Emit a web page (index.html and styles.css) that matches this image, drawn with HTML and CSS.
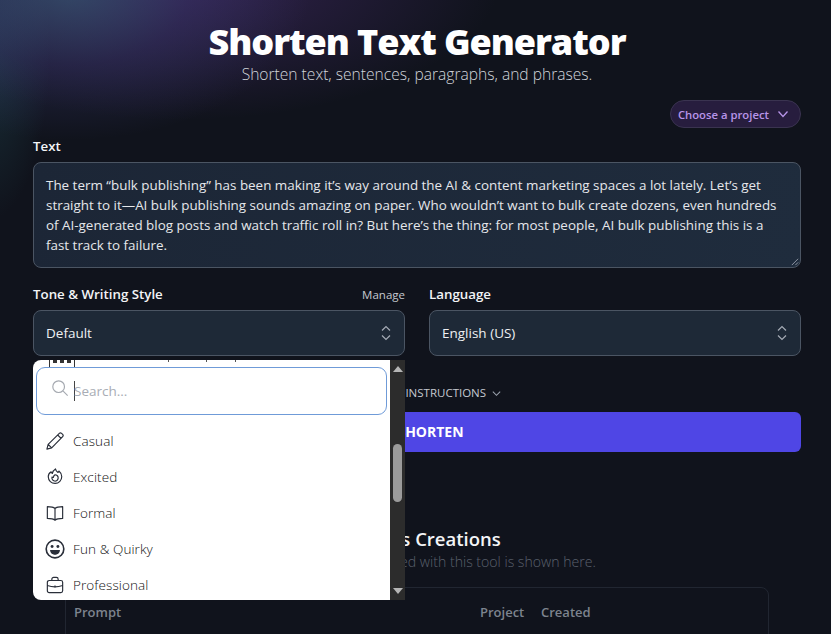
FILE: index.html
```html
<!DOCTYPE html>
<html lang="en">
<head>
<meta charset="utf-8">
<title>Shorten Text Generator</title>
<link rel="stylesheet" href="styles.css">
</head>
<body>
<div class="page">
  <header class="hero">
    <h1 class="title">Shorten Text Generator</h1>
    <p class="subtitle">Shorten text, sentences, paragraphs, and phrases.</p>
  </header>
  <div class="project-row">
    <button class="project-btn">Choose a project
      <svg class="project-chev" viewBox="0 0 12 12"><path d="M1.500 3.500 6 8.500l4.500-5"/></svg>
    </button>
  </div>
  <label class="label text-label">Text</label>
  <div class="textarea">The term “bulk publishing” has been making it’s way around the AI &amp; content marketing spaces a lot lately. Let’s get straight to it—AI bulk publishing sounds amazing on paper. Who wouldn’t want to bulk create dozens, even hundreds of AI-generated blog posts and watch traffic roll in? But here’s the thing: for most people, AI bulk publishing this is a fast track to failure.
    <svg class="grip" viewBox="0 0 10 10"><path d="M9 2 2 9M9 6 6 9"/></svg>
  </div>
  <div class="selects">
    <div class="field">
      <div class="field-head"><span class="label">Tone &amp; Writing Style</span><span class="manage">Manage</span></div>
      <div class="select">Default
        <svg class="updown" viewBox="0 0 12 18"><path d="M2 6.500 6 2.500l4 4M2 11.500l4 4 4-4"/></svg>
      </div>
    </div>
    <div class="field">
      <div class="field-head"><span class="label">Language</span></div>
      <div class="select">English (US)
        <svg class="updown" viewBox="0 0 12 18"><path d="M2 6.500 6 2.500l4 4M2 11.500l4 4 4-4"/></svg>
      </div>
    </div>
  </div>
  <div class="instructions">ADD CUSTOM INSTRUCTIONS
    <svg class="instr-chev" viewBox="0 0 12 12"><path d="M2 4l4 4 4-4"/></svg>
  </div>
  <button class="shorten">SHORTEN</button>
  <section class="creations">
    <h2 class="creations-title">Previous Creations</h2>
    <p class="creations-sub">Everything you've generated with this tool is shown here.</p>
    <div class="table">
      <span class="th th-prompt">Prompt</span>
      <span class="th th-project">Project</span>
      <span class="th th-created">Created</span>
    </div>
  </section>
</div>

<div class="dropdown">
  <div class="dd-body">
    <div class="dd-peek"><span class="dd-peek-icon"></span><span class="dd-peek-text"></span></div>
    <div class="search">
      <svg class="search-icon" viewBox="0 0 20 20"><circle cx="8.500" cy="8.500" r="6.500"/><path d="m13.500 13.500 5 5"/></svg>
      <span class="caret"></span><span class="placeholder">Search...</span>
    </div>
    <ul class="options">
      <li class="option">
        <svg class="opt-icon" viewBox="0 0 20 20"><path d="M1 19l1.400-5.300L14.800 1.500a1.800 1.800 0 0 1 2.500 0l1.200 1.200a1.800 1.800 0 0 1 0 2.500L6.300 17.600zM13 3.300l3.700 3.700M2.400 13.700l3.900 3.900"/></svg>
        Casual</li>
      <li class="option">
        <svg class="opt-icon" viewBox="0 0 20 20"><path d="M10.500 1c.3 2 1.500 3 2.800 4 .6-.5.9-1 1-1.700 2 1.600 3.200 3.900 3.200 6.200a7.500 7.500 0 0 1-15 .3c0-2.400 1.100-4.300 3.200-5.500.3 1 .7 1.500 1.400 1.800C7.400 4.100 8.700 2.100 10.500 1z"/><path d="M10 7.500a3.500 3.500 0 1 1-3.300 2.500c.6.400 1 .5 1.500.4.100-1.100.800-2.300 1.800-2.900z"/></svg>
        Excited</li>
      <li class="option">
        <svg class="opt-icon" viewBox="0 0 20 20"><path d="M10 5C8.500 3.600 6.500 3 1.500 3v13c5 0 7 .6 8.500 2 1.500-1.400 3.500-2 8.500-2V3c-5 0-7 .6-8.500 2zM10 5v13"/></svg>
        Formal</li>
      <li class="option">
        <svg class="opt-icon opt-fun" viewBox="0 0 22 22"><circle cx="11" cy="11" r="9.700"/><circle class="solid" cx="7.800" cy="8.300" r="1.600"/><circle class="solid" cx="14.200" cy="8.300" r="1.600"/><path class="solid" d="M5.600 12h10.800c0 3-2.400 5.200-5.400 5.200S5.600 15 5.600 12z"/></svg>
        Fun &amp; Quirky</li>
      <li class="option">
        <svg class="opt-icon" viewBox="0 0 20 20"><path d="M6.500 5V3.500a2 2 0 0 1 2-2h3a2 2 0 0 1 2 2V5M3.500 5h13a2 2 0 0 1 2 2v9.500a2 2 0 0 1-2 2h-13a2 2 0 0 1-2-2V7a2 2 0 0 1 2-2zM1.500 10.500c5.500 2 11.500 2 17 0M10 11v1.500"/></svg>
        Professional</li>
    </ul>
  </div>
  <div class="scrollbar">
    <span class="arrow arrow-up"></span>
    <span class="thumb"></span>
    <span class="arrow arrow-down"></span>
  </div>
</div>
</body>
</html>
```

FILE: styles.css
```css
* { box-sizing: border-box; }
html, body { margin: 0; height: 100%; }
body {
  width: 831px;
  height: 634px;
  overflow: hidden;
  position: relative;
  font-family: "Open Sans", "Noto Sans", sans-serif;
  color: #fff;
  background:
    radial-gradient(ellipse 240px 150px at 70px -10px, rgba(60,100,130,.6), rgba(60,60,120,.35) 50%, rgba(50,30,90,0) 100%),
    radial-gradient(ellipse 320px 140px at 180px -20px, rgba(85,50,130,.5), rgba(60,40,100,0) 100%),
    radial-gradient(ellipse 60px 170px at -10px 50px, rgba(40,100,110,.35), rgba(40,100,110,0) 100%),
    #10131c;
}
.page { padding: 20px 30px 0 33px; }
.hero { text-align: center; }
.title { margin: 0; font-size: 36px; line-height: 44px; font-weight: 800; letter-spacing: -1.050px; color: #fff; }
.subtitle { margin: 0; font-size: 15.600px; line-height: 20px; font-weight: 300; color: #d1d5db; }
.project-row { display: flex; justify-content: flex-end; margin-top: 16px; }
.project-btn {
  display: flex; align-items: center; gap: 8px;
  height: 28px; padding: 0 11px 0 7px;
  font: 600 11.300px "Open Sans", sans-serif; color: #b794e8;
  background: #271d3e; border: 1px solid #3a3350; border-radius: 14px;
}
.project-chev { width: 12px; height: 12px; fill: none; stroke: #b794e8; stroke-width: 1.300; }
.label { font-size: 13.300px; line-height: 18px; font-weight: 600; color: #f3f4f6; }
.text-label { display: block; margin-top: 9px; }
.textarea {
  position: relative; margin-top: 7px; height: 106px; padding: 12px 20px 12px 12px;
  font-size: 13.420px; line-height: 20px; color: #e5e7eb;
  background: linear-gradient(100deg, #1c2636, #1f2c3d);
  border: 1px solid #4b5563; border-radius: 8px;
}
.grip { position: absolute; right: 1px; bottom: 1px; width: 9px; height: 9px; fill: none; stroke: #9ca3af; stroke-width: 1; }
.selects { display: grid; grid-template-columns: 372px 372px; gap: 24px; margin-top: 17px; }
.field-head { display: flex; justify-content: space-between; align-items: center; height: 18px; }
.manage { font-size: 11.500px; color: #c5c9d0; }
.select {
  position: relative; display: flex; align-items: center; justify-content: space-between;
  height: 46px; margin-top: 7px; padding: 0 12px;
  font-size: 13.500px; color: #eef0f3;
  background: #1e2937; border: 1px solid #4b5563; border-radius: 8px;
}
.updown { width: 12px; height: 18px; fill: none; stroke: #a5abb5; stroke-width: 1.200; }
.instructions {
  display: flex; align-items: center; justify-content: center; gap: 5px;
  margin-top: 28px; padding-right: 4px; font-size: 11.500px; line-height: 18px; color: #c5c9d0;
}
.instr-chev { width: 11px; height: 11px; fill: none; stroke: #9ca3af; stroke-width: 1.100; }
.shorten {
  display: block; width: 100%; height: 40px; margin-top: 10px; padding: 0 0 2px 27px;
  font: 700 14px "Open Sans", sans-serif; color: #fff;
  background: #4f46e5; border: 0; border-radius: 6px;
}
.creations { margin-top: 75px; }
.creations-title { margin: 0; text-align: center; font-size: 18.500px; line-height: 24px; font-weight: 600; color: #f3f4f6; }
.creations-sub { margin: 2px 0 0; text-align: center; font-size: 14.100px; line-height: 18px; font-weight: 300; color: #5a606c; }
.table {
  display: grid; grid-template-columns: 406px 61px 1fr; height: 60px;
  width: 704px; margin: 16px 0 0 32px; padding: 15px 8px;
  border: 1px solid #212631; border-radius: 8px 8px 0 0;
  font-size: 13px; font-weight: 600; color: #7d838e; line-height: 18px;
}

.dropdown {
  position: absolute; left: 33px; top: 360px; width: 372px; height: 240px;
  display: flex; overflow: hidden; background: #fff;
  border-radius: 8px 0 0 8px; color: #374151;
}
.dd-body { position: relative; flex: 1; min-width: 0; overflow: hidden; }
.dd-peek { height: 7px; }
.dd-peek-icon {
  position: absolute; left: 16px; top: 0; width: 26px; height: 7px;
  border: 1px solid #333; border-width: 0 1px;
}
.dd-peek-icon::after {
  content: ""; position: absolute; left: 3px; top: 0; width: 4px; height: 3px;
  background: #333; box-shadow: 7px 0 #333, 14px 0 #333;
}
.dd-peek-text {
  position: absolute; left: 135px; top: 0; width: 1px; height: 2px;
  background: #555; box-shadow: 38px 0 #555, 67px 0 #555;
}
.search {
  position: relative; display: flex; align-items: center;
  width: 351px; height: 48px; margin-left: 3px; padding-left: 37px;
  border: 1.500px solid #6f9bd8; border-radius: 9px; background: #fff;
  font-size: 13.500px; color: #a8adb5;
}
.search-icon { position: absolute; left: 14px; top: 11px; width: 18px; height: 18px; fill: none; stroke: #a5a9b0; stroke-width: 1.300; }
.caret { width: 1px; height: 20px; background: #444; margin-right: -1px; }
.options { list-style: none; margin: 8px 0 0; padding: 0; }
.option {
  display: flex; align-items: center; gap: 9px;
  height: 36px; padding-left: 13px;
  font-size: 13.500px; letter-spacing: .1px; font-weight: 300; color: #111;
}
.opt-icon { flex: none; width: 18px; height: 18px; fill: none; stroke: #2a2f3a; stroke-width: 1.300; stroke-linejoin: round; stroke-linecap: round; }
.opt-fun { stroke-width: 1.800; width: 20px; height: 20px; margin: 0 -1px; }
.opt-fun .solid { fill: #2a2f3a; stroke: none; }
.scrollbar {
  position: relative; flex: none; width: 15px; background: #2c2c2c;
}
.arrow { position: absolute; left: 3px; width: 0; height: 0; border-left: 5px solid transparent; border-right: 5px solid transparent; }
.arrow-up { top: 6px; border-bottom: 6px solid #b5b5b5; }
.arrow-down { bottom: 6px; border-top: 6px solid #b5b5b5; }
.thumb { position: absolute; left: 3px; top: 84px; width: 9px; height: 58px; background: #9b9b9b; border-radius: 5px; }
```
